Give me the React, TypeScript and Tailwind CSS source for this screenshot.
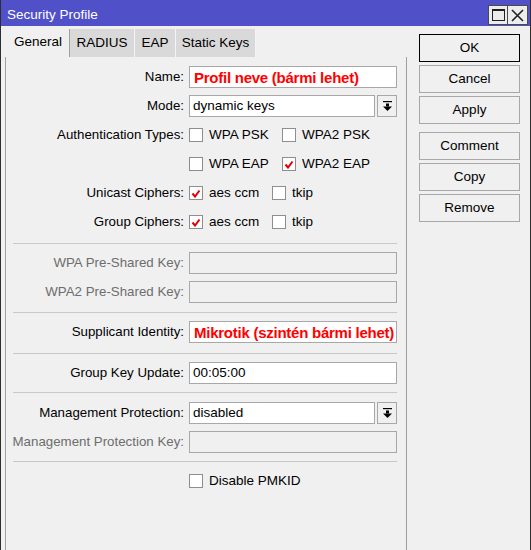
import React from 'react'

function DropBtn() {
  return (
    <div className="w-[20px] h-[22px] ml-[2px] border border-[#a8a8a8] bg-[#f0f0f0] flex items-center justify-center">
      <svg width="9" height="11" viewBox="0 0 9 11">
        <rect x="0" y="0" width="9" height="1.2" fill="#000" />
        <rect x="3" y="2.5" width="3" height="3" fill="#000" />
        <polygon points="0,5.5 9,5.5 4.5,10" fill="#000" />
      </svg>
    </div>
  )
}

function Check({ checked }: { checked?: boolean }) {
  return (
    <div className="w-[14px] h-[14px] border border-[#8e8e8e] bg-white flex items-center justify-center shrink-0">
      {checked && (
        <svg width="10" height="9" viewBox="0 0 10 9">
          <polyline points="1.5,4.5 4,7.5 8.5,1.5" fill="none" stroke="#e00000" strokeWidth="2" />
        </svg>
      )}
    </div>
  )
}

function Row({ label, disabled, children }: { label?: string; disabled?: boolean; children: React.ReactNode }) {
  return (
    <div className="flex items-center h-[22px]">
      <div className={`w-[178px] text-right whitespace-nowrap text-[13.3px] ${disabled ? 'text-[#6d6d6d]' : 'text-black'}`}>
        {label ? `${label}:` : ''}
      </div>
      <div className="ml-[5px] w-[208px] flex items-center h-full">{children}</div>
    </div>
  )
}

function Field({ value, red, disabled, drop }: { value?: string; red?: boolean; disabled?: boolean; drop?: boolean }) {
  return (
    <>
      <div
        className={`flex-1 h-[22px] border border-[#a8a8a8] flex items-center overflow-hidden whitespace-nowrap
          ${disabled ? 'bg-[#f0f0f0]' : 'bg-white'}
          ${red ? 'pl-[4px] text-[#ff0000] font-bold text-[15px] tracking-[-0.25px]' : 'pl-[3px] text-black'}`}
      >
        {value}
      </div>
      {drop && <DropBtn />}
    </>
  )
}

function Opt({ label, checked, w }: { label: string; checked?: boolean; w?: string }) {
  return (
    <div className={`flex items-center gap-[6px] ${w ?? ''}`}>
      <Check checked={checked} />
      <span className="text-black whitespace-nowrap">{label}</span>
    </div>
  )
}

// separator line; margins tuned per spot to land on the reference rows
function Sep({ m }: { m: string }) {
  return <div className={`h-px bg-[#c8c8c8] ml-[7px] mr-[9px] ${m}`} />
}

function Btn({ label, focus }: { label: string; focus?: boolean }) {
  return (
    <div
      className={`h-[28px] w-[101px] flex items-center justify-center bg-[#f0f0f0] text-black border
        ${focus ? 'border-black' : 'border-[#a8a8a8]'}`}
    >
      {label}
    </div>
  )
}

export default function App() {
  return (
    <div className="w-[531px] h-[550px] bg-[#f0f0f0] border-l border-r border-[#2e2e2e] flex flex-col overflow-hidden font-['Liberation_Sans',Arial,sans-serif] text-[13.5px] leading-none">
      {/* Title bar */}
      <div className="h-[26px] bg-[#5050c8] flex items-center pl-[6px] pr-[2px] shrink-0">
        <span className="text-white text-[13.5px] mt-[3px]">Security Profile</span>
        <div className="ml-auto self-end mb-[1px] flex">
          <div className="w-[20px] h-[20px] bg-[#ececec] border border-[#4a4a4a] flex items-center justify-center">
            <div className="w-[13px] h-[12px] border border-[#202020] border-t-2" />
          </div>
          <div className="w-[20px] h-[20px] bg-[#ececec] border border-l-0 border-[#4a4a4a] flex items-center justify-center">
            <svg width="13" height="13" viewBox="0 0 13 13">
              <path d="M1 1 L12 12 M12 1 L1 12" stroke="#202020" strokeWidth="1.6" />
            </svg>
          </div>
        </div>
      </div>

      <div className="flex flex-1 min-h-0">
        {/* Left part */}
        <div className="w-[406px] flex flex-col">
          {/* Tabs */}
          <div className="h-[31px] flex items-end pl-[2px] shrink-0">
            <div className="h-[31px] w-[66px] pl-[11px] flex items-center bg-[#f0f0f0] text-black">General</div>
            <div className="h-[28px] w-[65px] flex items-center justify-center bg-[#d9d9d9] border-l border-[#a0a0a0] text-black">RADIUS</div>
            <div className="h-[28px] w-[41px] flex items-center justify-center bg-[#d9d9d9] border-l border-[#f4f4f4] text-black">EAP</div>
            <div className="h-[28px] w-[81px] flex items-center justify-center bg-[#d9d9d9] border-l border-r border-[#f4f4f4] text-black">Static Keys</div>
          </div>

          {/* Panel */}
          <div className="flex-1 ml-[4px] border-l border-r border-[#a0a0a0] pt-[9px] flex flex-col gap-[7px]">
            <Row label="Name">
              <Field value="Profil neve (bármi lehet)" red />
            </Row>
            <Row label="Mode">
              <Field value="dynamic keys" drop />
            </Row>
            <Row label="Authentication Types">
              <Opt label="WPA PSK" w="w-[93px]" />
              <Opt label="WPA2 PSK" />
            </Row>
            <Row>
              <Opt label="WPA EAP" w="w-[93px]" />
              <Opt label="WPA2 EAP" checked />
            </Row>
            <Row label="Unicast Ciphers">
              <Opt label="aes ccm" checked w="w-[83px]" />
              <Opt label="tkip" />
            </Row>
            <Row label="Group Ciphers">
              <Opt label="aes ccm" checked w="w-[83px]" />
              <Opt label="tkip" />
            </Row>
            <Sep m="mt-[3px] mb-[1px]" />
            <Row label="WPA Pre-Shared Key" disabled>
              <Field disabled />
            </Row>
            <Row label="WPA2 Pre-Shared Key" disabled>
              <Field disabled />
            </Row>
            <Sep m="mt-[2px] mb-[1px]" />
            <Row label="Supplicant Identity">
              <Field value="Mikrotik (szintén bármi lehet)" red />
            </Row>
            <Sep m="mt-[3px] mb-[1px]" />
            <Row label="Group Key Update">
              <Field value="00:05:00" />
            </Row>
            <Sep m="mt-[1px] mb-[2px]" />
            <Row label="Management Protection">
              <Field value="disabled" drop />
            </Row>
            <Row label="Management Protection Key" disabled>
              <Field disabled />
            </Row>
            <Sep m="mt-[1px] mb-[1px]" />
            <Row>
              <Opt label="Disable PMKID" />
            </Row>
          </div>
        </div>

        {/* Buttons */}
        <div className="pl-[12px] pt-[8px] flex flex-col gap-[3px]">
          <Btn label="OK" focus />
          <Btn label="Cancel" />
          <Btn label="Apply" />
          <div className="mt-[5px]">
            <Btn label="Comment" />
          </div>
          <Btn label="Copy" />
          <Btn label="Remove" />
        </div>
      </div>
    </div>
  )
}
